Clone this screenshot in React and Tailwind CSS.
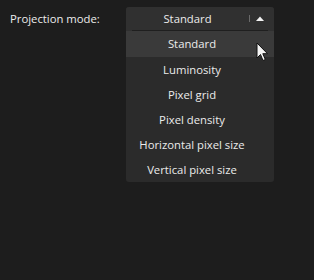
import React from "react";

const items = ["Standard", "Luminosity", "Pixel grid", "Pixel density", "Horizontal pixel size", "Vertical pixel size"];

export default function App() {
  return (
    <div
      className="relative w-[314px] h-[280px] bg-[#1d1d1d] text-[#ececec] text-[11.3px] font-medium"
      style={{ fontFamily: '"Open Sans", "Noto Sans", sans-serif' }}
    >
      <div className="flex items-start pt-[7px]">
        <div className="pl-[10px] w-[126px] h-[24px] flex items-center leading-none">Projection mode:</div>
        <div className="w-[148px] rounded-[3px] bg-[#2b2b2b] overflow-hidden">
          <div className="h-[23px] flex items-center bg-[#303030]">
            <div className="flex-1 pr-[16px] text-center leading-none pl-[16px]">Standard</div>
            <div className="w-px h-[7px] bg-[#6a6a6a] mr-[6px]" />
            <svg width="8" height="5" viewBox="0 0 8 5" className="mr-[10px]">
              <polygon points="0,5 4,0.5 8,5" fill="#f2f2f2" />
            </svg>
          </div>
          <div className="h-px bg-[#303030] px-[6px]">
            <div className="h-px bg-[#1f1f1f]" />
          </div>
          <div className="flex flex-col">
            {items.map((t, i) => (
              <div
                key={t}
                className={
                  "flex items-center justify-center pr-[16px] leading-none " +
                  (i === 0 ? "h-[26px] bg-[#3a3a3a]" : "h-[25px]")
                }
              >
                {t}
              </div>
            ))}
          </div>
        </div>
      </div>
      <svg
        className="absolute left-[256px] top-[42px]"
        width="13"
        height="20"
        viewBox="0 0 13 20"
      >
        <path d="M1 1 L1 16 L4.5 12.5 L7 18.5 L9.3 17.5 L6.8 11.7 L11.5 11.7 Z" fill="#f4f4f4" stroke="#111" strokeWidth="1" strokeLinejoin="round" />
      </svg>
    </div>
  );
}
